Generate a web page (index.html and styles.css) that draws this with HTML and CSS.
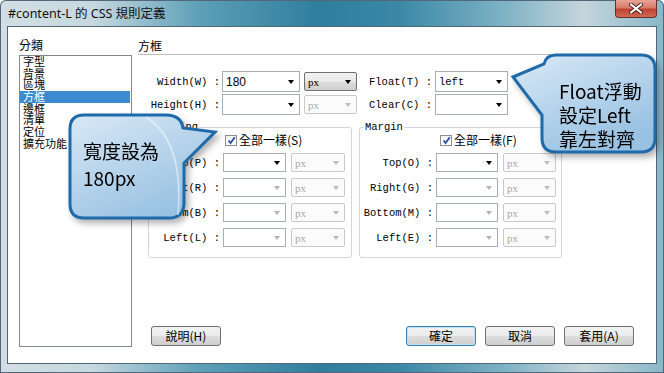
FILE: index.html
```html
<!DOCTYPE html>
<html lang="zh-Hant">
<head>
    <meta charset="UTF-8">
    <title>#content-L 的 CSS 規則定義</title>
    <link rel="stylesheet" href="styles.css">
</head>
<body>
    <div class="window">
        <div class="titlebar">
            <span class="title">#content-L 的 CSS 規則定義</span>
            <div class="close">
                <svg width="16" height="11" viewBox="0 0 16 11">
                    <path d="M3 1.5 L13 9.5 M13 1.5 L3 9.5" stroke="#4a2420" stroke-width="4" stroke-linecap="round"/>
                    <path d="M3 1.5 L13 9.5 M13 1.5 L3 9.5" stroke="#fff" stroke-width="2.2" stroke-linecap="round"/>
                </svg>
            </div>
        </div>

        <div class="client">
            <div class="cats">
                <div class="cap">分類</div>
                <ul class="catlist">
                    <li>字型</li>
                    <li>背景</li>
                    <li>區塊</li>
                    <li class="active">方框</li>
                    <li>邊框</li>
                    <li>清單</li>
                    <li>定位</li>
                    <li>擴充功能</li>
                </ul>
            </div>

            <div class="panel">
                <div class="heading">方框</div>

                <div class="form">
                    <div class="row">
                        <span class="lbl lbl-w">Width(W) :</span>
                        <div class="sel sel-w"><span class="val">180</span></div>
                        <div class="unit on">px</div>
                        <span class="lbl lbl-f">Float(T) :</span>
                        <div class="sel sel-f"><span class="val mono">left</span></div>
                    </div>
                    <div class="row">
                        <span class="lbl lbl-w">Height(H) :</span>
                        <div class="sel sel-w"></div>
                        <div class="unit off">px</div>
                        <span class="lbl lbl-f">Clear(C) :</span>
                        <div class="sel sel-f"></div>
                    </div>
                </div>

                <div class="groups">
                    <fieldset class="group pad">
                        <legend>Padding</legend>
                        <div class="check"><span class="box"><svg width="9" height="9" viewBox="0 0 9 9"><path d="M1.5 4.5 L3.6 7 L7.8 1.2" fill="none" stroke="#2a4fa8" stroke-width="1.8"/></svg></span>全部一樣(S)</div>
                        <div class="grow"><span class="lbl">Top(P) :</span><div class="sel"></div><div class="unit off">px</div></div>
                        <div class="grow"><span class="lbl">Right(R) :</span><div class="sel dis"></div><div class="unit off">px</div></div>
                        <div class="grow"><span class="lbl">Bottom(B) :</span><div class="sel dis"></div><div class="unit off">px</div></div>
                        <div class="grow"><span class="lbl">Left(L) :</span><div class="sel dis"></div><div class="unit off">px</div></div>
                    </fieldset>
                    <fieldset class="group mar">
                        <legend>Margin</legend>
                        <div class="check"><span class="box"><svg width="9" height="9" viewBox="0 0 9 9"><path d="M1.5 4.5 L3.6 7 L7.8 1.2" fill="none" stroke="#2a4fa8" stroke-width="1.8"/></svg></span>全部一樣(F)</div>
                        <div class="grow"><span class="lbl">Top(O) :</span><div class="sel"></div><div class="unit off">px</div></div>
                        <div class="grow"><span class="lbl">Right(G) :</span><div class="sel dis"></div><div class="unit off">px</div></div>
                        <div class="grow"><span class="lbl">Bottom(M) :</span><div class="sel dis"></div><div class="unit off">px</div></div>
                        <div class="grow"><span class="lbl">Left(E) :</span><div class="sel dis"></div><div class="unit off">px</div></div>
                    </fieldset>
                </div>

                <div class="buttons">
                    <button class="btn">說明(H)</button>
                    <button class="btn ok">確定</button>
                    <button class="btn">取消</button>
                    <button class="btn">套用(A)</button>
                </div>
            </div>
        </div>

        <!-- callouts laid over the dialog -->
        <div class="callout callout-width">
            <svg class="bubble" width="154" height="114" viewBox="0 0 154 114">
                <defs>
                    <linearGradient id="fillA" x1="0" y1="0" x2="0.6" y2="1">
                        <stop offset="0" stop-color="#d9e9f6"/>
                        <stop offset="1" stop-color="#98c1e2"/>
                    </linearGradient>
                </defs>
                <path d="M18 4 H100 Q115 4 117 17 L149 21 L118 52 V93 Q117 107 103 107 H18 Q4 107 4 93 V18 Q4 4 18 4 Z" fill="url(#fillA)" stroke="#1f6aab" stroke-width="3"/>
                <path d="M80 6 Q118 30 112 104" fill="none" stroke="#ffffff" stroke-opacity="0.45" stroke-width="2"/>
            </svg>
            <div class="say">寬度設為<br>180px</div>
        </div>

        <div class="callout callout-float">
            <svg class="bubble" width="152" height="108" viewBox="0 0 152 108">
                <defs>
                    <linearGradient id="fillB" x1="0" y1="0" x2="0.6" y2="1">
                        <stop offset="0" stop-color="#d9e9f6"/>
                        <stop offset="1" stop-color="#98c1e2"/>
                    </linearGradient>
                </defs>
                <path d="M48 4 H133 Q147 4 147 18 V87 Q147 101 133 101 H48 Q34 101 34 87 V64 L5 26 L36 13 Q38 4 48 4 Z" fill="url(#fillB)" stroke="#1f6aab" stroke-width="3"/>
            </svg>
            <div class="say">Float浮動<br>設定Left<br>靠左對齊</div>
        </div>
    </div>
</body>
</html>
```

FILE: styles.css
```css
/* Reset */
* {
    margin: 0;
    padding: 0;
    box-sizing: border-box;
}

body {
    width: 664px;
    height: 373px;
    overflow: hidden;
    font-family: "Noto Sans CJK TC", sans-serif;
    font-size: 12px;
    color: #000;
}

/* Aero style window frame */
.window {
    position: relative;
    height: 373px;
    display: flex;
    flex-direction: column;
    border-radius: 6px 6px 0 0;
    background: linear-gradient(90deg, #d3dee4 0%, #c6d8e0 14%, #5d9fb7 30%, #2f7e9e 48%, #3a88a6 60%, #7fb2c5 76%, #c6d5db 88%, #86b7c9 100%);
    box-shadow: inset 0 0 0 1px #52687a;
}

.titlebar {
    height: 26px;
    display: flex;
    align-items: flex-start;
    padding-left: 8px;
}

.title {
    font-family: "Noto Sans", "Noto Sans CJK TC", sans-serif;
    font-size: 12.5px;
    line-height: 16px;
    margin-top: 6px;
    color: #111;
}

.close {
    margin-left: auto;
    margin-right: 7px;
    width: 42px;
    height: 18px;
    display: flex;
    align-items: center;
    justify-content: center;
    border: 1px solid #6a2f27;
    border-top: none;
    border-radius: 0 0 4px 4px;
    background: linear-gradient(#e7a597 0%, #d77a68 45%, #c0432f 55%, #cf6a55 100%);
}

/* Client area */
.client {
    flex: 1;
    margin: 0 7px 9px 7px;
    background: #fff;
    border: 1px solid #4f6776;
    display: flex;
    padding: 11px 11px 16px 11px;
}

.cats {
    width: 113px;
    display: flex;
    flex-direction: column;
}

.cap {
    line-height: 14px;
    margin-bottom: 3px;
}

.catlist {
    flex: 1;
    list-style: none;
    border: 1px solid #828790;
    padding: 0 1px 0 0;
}

.catlist li {
    font-size: 11px;
    line-height: 11.7px;
    height: 11.7px;
    padding-left: 3px;
    white-space: nowrap;
}

.catlist li.active {
    background: #3b8ad2;
    color: #fff;
}

.panel {
    flex: 1;
    margin-left: 6px;
    display: flex;
    flex-direction: column;
}

.heading {
    line-height: 16px;
    border-bottom: 1px solid #bcbcbc;
}

/* Top form */
.form {
    margin-top: 16px;
    display: flex;
    flex-direction: column;
    gap: 2px;
}

.row {
    display: flex;
    align-items: center;
    height: 21px;
}

.lbl {
    font-family: "Liberation Mono", monospace;
    font-size: 10.5px;
    text-align: right;
    white-space: nowrap;
    color: #000;
}

.lbl-w { width: 82px; margin-right: 2px; }
.lbl-f { width: 75px; margin-right: 3px; }

.sel {
    height: 21px;
    border: 1px solid #a9adb4;
    background: #fff;
    display: flex;
    align-items: center;
    padding-left: 3px;
}

.sel::after {
    content: "";
    margin-left: auto;
    margin-right: 5px;
    border-left: 3.5px solid transparent;
    border-right: 3.5px solid transparent;
    border-top: 4px solid #000;
}

.sel.dis::after {
    border-top-color: #b4b4b4;
}

.sel-w { width: 78px; }
.sel-f { width: 73px; }

.val {
    font-family: "Liberation Sans", sans-serif;
    font-size: 12px;
}

.val.mono {
    font-family: "Liberation Mono", monospace;
    font-size: 10.5px;
}

.unit {
    width: 53px;
    height: 19px;
    margin-left: 4px;
    display: flex;
    align-items: center;
    padding-left: 3px;
    font-family: "Liberation Serif", serif;
    font-size: 11px;
    border-radius: 2px;
}

.unit::after {
    content: "";
    margin-left: auto;
    margin-right: 5px;
    border-left: 3.5px solid transparent;
    border-right: 3.5px solid transparent;
    border-top: 4px solid #000;
}

.unit.on {
    border: 1px solid #707070;
    background: linear-gradient(#f3f3f3 0%, #e9e9e9 50%, #dcdcdc 51%, #d0d0d0 100%);
}

.unit.off {
    border: 1px solid #c9c9c9;
    background: #fbfbfb;
    color: #a8a8a8;
}

.unit.off::after {
    border-top-color: #bdbdbd;
}

/* Padding / Margin groups */
.groups {
    display: flex;
    gap: 7px;
    margin-top: 6px;
    margin-left: 10px;
}

.group {
    border: 1px solid #cfd6dc;
    border-radius: 3px;
    padding: 0 0 10px 0;
    display: flex;
    flex-direction: column;
    gap: 6px;
}

.group.pad { width: 204px; }
.group.mar { width: 203px; }

.group legend {
    font-family: "Liberation Mono", monospace;
    font-size: 10.5px;
    line-height: 12px;
    margin-left: 4px;
    padding: 0 1px;
}

.check {
    height: 14px;
    display: flex;
    align-items: center;
    gap: 2px;
    line-height: 14px;
}

.pad .check { padding-left: 76px; }
.mar .check { padding-left: 80px; }

.box {
    width: 12px;
    height: 11px;
    border: 1px solid #8f8f8f;
    background: linear-gradient(#f4f4f4, #fff);
    display: flex;
    align-items: center;
    justify-content: center;
}

.grow {
    display: flex;
    align-items: center;
    height: 19px;
}

.grow .lbl { margin-right: 3px; }
.grow .sel { height: 19px; }
.grow .unit { margin-left: 5px; }

.pad .lbl { width: 71px; }
.pad .sel { width: 63px; }
.pad .unit { width: 54px; }

.mar .lbl { width: 73px; }
.mar .sel { width: 62px; }
.mar .unit { width: 53px; }

/* Dialog buttons */
.buttons {
    margin-top: auto;
    margin-bottom: 1px;
    display: flex;
    gap: 9px;
    padding: 0 11px 0 13px;
}

.btn {
    width: 70px;
    height: 20px;
    font-family: "Noto Sans CJK TC", sans-serif;
    font-size: 12px;
    line-height: 18px;
    border: 1px solid #707070;
    border-radius: 3px;
    background: linear-gradient(#f2f2f2 0%, #ebebeb 50%, #dddddd 51%, #cfcfcf 100%);
    color: #000;
}

.btn:first-child {
    margin-right: auto;
}

.btn.ok {
    border-color: #3c7fb1;
    box-shadow: inset 0 0 0 1px #bfe3f6;
}

/* Callouts */
.callout {
    position: absolute;
    filter: drop-shadow(3px 4px 3px rgba(0, 0, 0, 0.3));
}

.bubble {
    position: absolute;
    left: 0;
    top: 0;
}

.say {
    position: relative;
    font-family: "Noto Sans CJK TC", sans-serif;
    font-size: 19px;
    color: #000;
}

.callout-width {
    left: 66px;
    top: 111px;
    width: 154px;
    height: 114px;
}

.callout-width .say {
    padding: 26px 0 0 17px;
    line-height: 27px;
}

.callout-float {
    left: 508px;
    top: 51px;
    width: 152px;
    height: 108px;
}

.callout-float .say {
    padding: 28px 0 0 51px;
    line-height: 24px;
}
```
